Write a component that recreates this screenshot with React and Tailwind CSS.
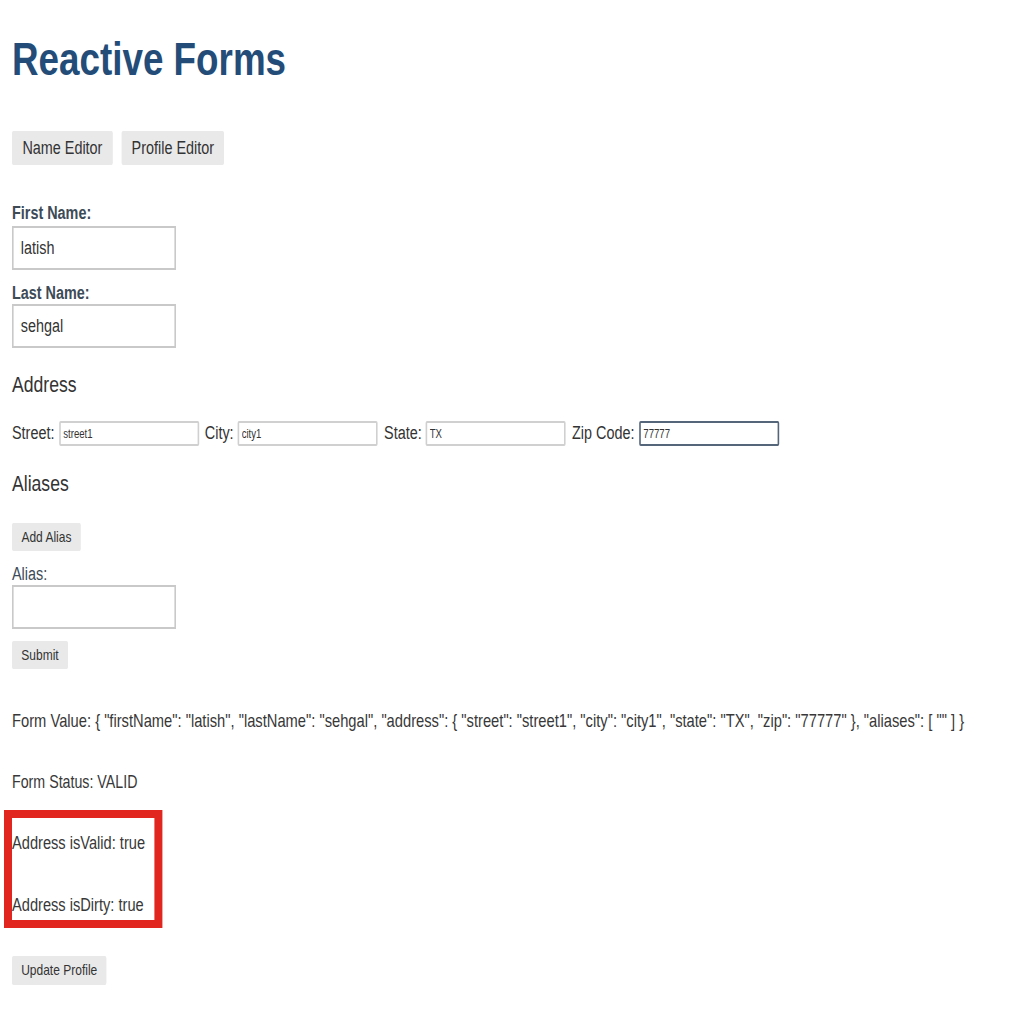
// The reference page is squeezed horizontally (~0.8), so the page is laid out
// at 1280px and scaled on the x axis only.
export default function App() {
    const font = { fontFamily: '"Liberation Sans", Arial, sans-serif' };
    const inputBig = 'block w-[205px] h-[44px] border-2 border-[#c9c9c9] bg-white px-[9px] text-[18px] text-[#333] outline-none';
    const inputSmall = 'w-[175px] h-[25px] border-2 border-[#d0d0d0] rounded-[2px] bg-white px-[3px] text-[12px] text-[#333] outline-none';
    const btn = 'bg-[#e9e9e9] text-[#333] rounded-[2px]';
    const text = 'leading-[22px] text-[#383838] whitespace-nowrap';

    return (
        <div className="min-h-screen w-[1024px] overflow-hidden bg-white">
            <div className="w-[1280px] origin-top-left scale-x-[0.8] pl-[15px] pt-[36px] text-[#333]" style={font}>
                <h1 className="text-[46px] leading-none font-bold text-[#234d78]">Reactive Forms</h1>

                {/* editor tabs */}
                <div className="mt-[49px] flex gap-[11px]">
                    <button className={`${btn} h-[34px] w-[126px] text-[18px]`}>Name Editor</button>
                    <button className={`${btn} h-[34px] w-[128px] text-[18px]`}>Profile Editor</button>
                </div>

                <form className="mt-[37px]" onSubmit={e => e.preventDefault()}>
                    <label className="block text-[18px] leading-[22px] font-bold text-[#3d4b57]">First Name:</label>
                    <input className={`${inputBig} mt-[2px]`} defaultValue="latish" />
                    <label className="block mt-[12px] text-[18px] leading-[22px] font-bold text-[#3d4b57]">Last Name:</label>
                    <input className={inputBig} defaultValue="sehgal" />

                    <h2 className="mt-[24px] text-[22px] leading-[26px] text-[#333]">Address</h2>
                    <div className="mt-[22px] flex items-center text-[18px] text-[#333]">
                        <span>Street:</span>
                        <input className={`${inputSmall} ml-[6px]`} defaultValue="street1" />
                        <span className="ml-[7px]">City:</span>
                        <input className={`${inputSmall} ml-[5px]`} defaultValue="city1" />
                        <span className="ml-[8px]">State:</span>
                        <input className={`${inputSmall} ml-[5px]`} defaultValue="TX" />
                        <span className="ml-[8px]">Zip Code:</span>
                        <input className="ml-[6px] w-[175px] h-[25px] border-2 border-[#55657a] rounded-[2px] bg-white px-[3px] text-[12px] text-[#333] outline-none" defaultValue="77777" />
                    </div>

                    <h2 className="mt-[24px] text-[22px] leading-[26px] text-[#333]">Aliases</h2>
                    <button type="button" className={`${btn} mt-[26px] block h-[28px] w-[86px] text-[15px]`}>Add Alias</button>
                    <label className="block mt-[12px] text-[18px] leading-[22px] text-[#3d4b57]">Alias:</label>
                    <input className={inputBig} defaultValue="" />
                    <button type="submit" className={`${btn} mt-[12px] block h-[28px] w-[70px] text-[15px]`}>Submit</button>
                </form>

                <p className={`mt-[41px] text-[18.4px] ${text}`}>
                    Form Value: {'{ "firstName": "latish", "lastName": "sehgal", "address": { "street": "street1", "city": "city1", "state": "TX", "zip": "77777" }, "aliases": [ "" ] }'}
                </p>
                <p className={`mt-[39px] text-[17.8px] ${text}`}>Form Status: VALID</p>

                <div className="mt-[17px] -ml-[10px] w-[198px] h-[118px] border-x-[10px] border-y-[8px] border-[#e0261f] pt-[14px]">
                    <p className={`text-[18.3px] ${text}`}>Address isValid: true</p>
                    <p className={`mt-[40px] text-[18.3px] ${text}`}>Address isDirty: true</p>
                </div>

                <button className={`${btn} mt-[28px] h-[29px] w-[118px] text-[15px]`}>Update Profile</button>
            </div>
        </div>
    );
}
